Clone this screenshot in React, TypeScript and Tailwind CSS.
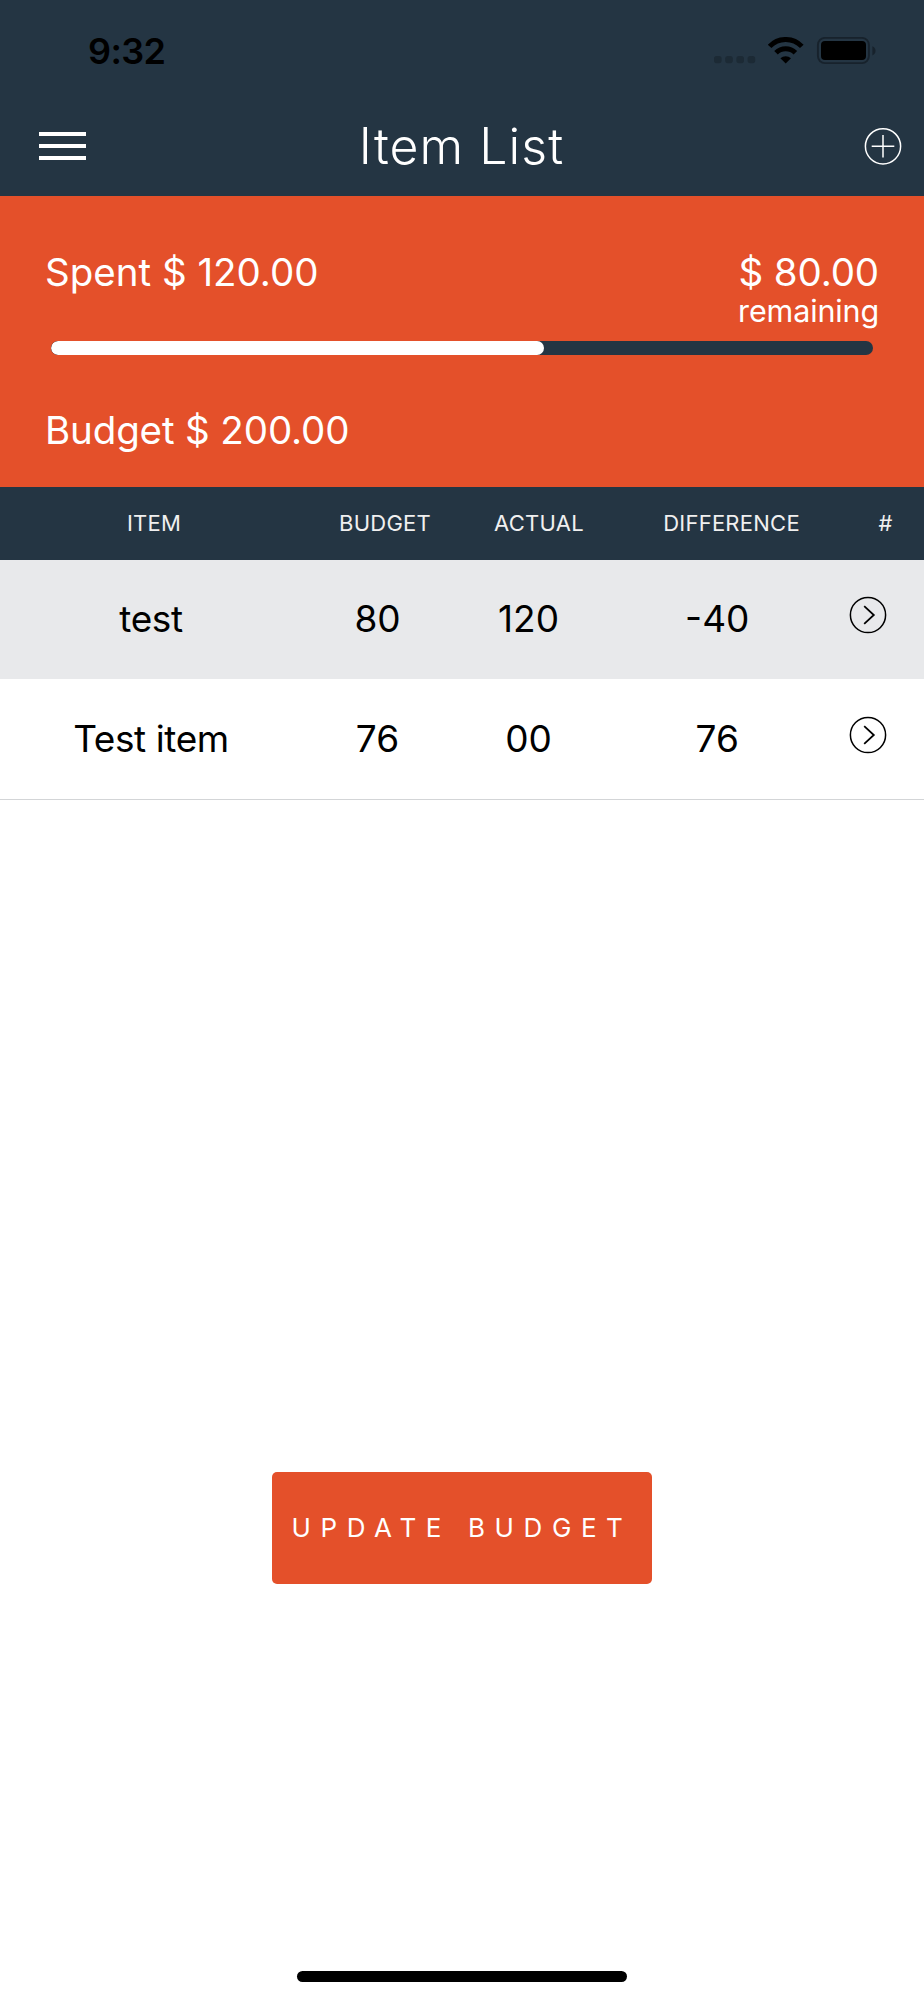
import { clsx } from "clsx";

const items = [
  { name: "test", budget: "80", actual: "120", difference: "-40" },
  { name: "Test item", budget: "76", actual: "00", difference: "76" },
];

const spent = 120;
const budget = 200;

function StatusBar() {
  return (
    <div className="flex h-[101px] items-center justify-between pl-[88px] pr-[48px] text-black">
      <span className="mt-px text-[36px] leading-none font-semibold tracking-[-0.6px]">9:32</span>
      <svg width="164" height="30" viewBox="0 0 164 30" className="mt-[2px]">
        {/* signal */}
        <g fill="#1c2a35">
          <rect x="2" y="19" width="7.6" height="7.2" rx="2.6" />
          <rect x="13.2" y="19" width="7.6" height="7.2" rx="2.6" />
          <rect x="24.4" y="19" width="7.6" height="7.2" rx="2.6" />
          <rect x="35.6" y="19" width="7.6" height="7.2" rx="2.6" />
        </g>
        {/* wifi */}
        <g fill="none" stroke="#000" strokeWidth="5">
          <path d="M57.6 9.4 A22.2 22.2 0 0 1 89.8 9.4" />
          <path d="M64 15.8 A13.6 13.6 0 0 1 83.4 15.8" />
        </g>
        <path d="M73.7 26.6 L68.4 21.3 A7.8 7.8 0 0 1 79 21.3 Z" fill="#000" />
        {/* battery */}
        <rect x="105.9" y="0.9" width="51" height="25.2" rx="7" fill="none" stroke="#17222c" strokeWidth="1.9" />
        <rect x="109" y="4" width="45" height="19" rx="4" fill="#000" />
        <path d="M160.4 9.2 C164.6 10.8 164.6 16.8 160.4 18.4 Z" fill="#17222c" />
      </svg>
    </div>
  );
}

function Header() {
  return (
    <div className="flex h-[95px] items-start justify-between pl-[39px] pr-[22px]">
      <button className="mt-[31px] flex w-[47px] flex-col gap-2">
        <span className="h-1 w-full bg-white" />
        <span className="h-1 w-full bg-white" />
        <span className="h-1 w-full bg-white" />
      </button>
      <h1 className="mt-[15px] ml-[-27px] text-[50px] leading-[60px] font-light tracking-[1.05px]">Item List</h1>
      <button className="mt-[26px]">
        <svg width="38" height="38" viewBox="0 0 38 38" fill="none" stroke="#fff" strokeWidth="1.5">
          <circle cx="19" cy="19.3" r="17.6" />
          <path d="M19 8 V30.6 M7.7 19.3 H30.3" />
        </svg>
      </button>
    </div>
  );
}

function Summary() {
  return (
    <section className="h-[291px] bg-[#e4502a] px-[45px] pt-[51px] text-[38.5px] leading-[50px]">
      <div className="flex justify-between">
        <p>Spent $ 120.00</p>
        <div className="text-right tracking-[-0.13px]">
          <p>$ 80.00</p>
          <p className="text-[30.5px] leading-[27px]">remaining</p>
        </div>
      </div>
      <div className="mx-[6px] mt-[17px] h-[14px] overflow-hidden rounded-full bg-[#243543]">
        <div className="h-full rounded-full bg-white" style={{ width: `${(spent / budget) * 100}%` }} />
      </div>
      <p className="mt-[50px] tracking-[-0.13px]">Budget $ 200.00</p>
    </section>
  );
}

function ItemTable() {
  return (
    <section className="text-center">
      <div className="grid h-[73px] grid-cols-[4fr_2fr_2fr_3fr_1fr] items-center bg-[#243543] text-[22px] tracking-[0.25px] text-[#f0f0f0]">
        <span>ITEM</span>
        <span>BUDGET</span>
        <span>ACTUAL</span>
        <span>DIFFERENCE</span>
        <span>#</span>
      </div>
      {items.map((item, i) => (
        <div
          key={item.name}
          className={clsx(
            "grid grid-cols-[4fr_2fr_2fr_3fr_1fr] items-center pr-[18px] text-[37px] text-black",
            i % 2 === 0 ? "h-[119px] bg-[#e8e9eb] pb-[2px]" : "h-[121px] border-b border-[#d3d5d7] bg-white"
          )}
        >
          <span className="tracking-[-0.4px]">{item.name}</span>
          <span>{item.budget}</span>
          <span>{item.actual}</span>
          <span>{item.difference}</span>
          <button className="-mt-2 justify-self-center">
            <svg width="38" height="38" viewBox="0 0 38 38" fill="none" stroke="#000" strokeWidth="1.5">
              <circle cx="19" cy="19" r="17.6" />
              <path d="M15.2 10.2 L24.8 19 L15.2 27.8" strokeWidth="1.8" />
            </svg>
          </button>
        </div>
      ))}
    </section>
  );
}

export default function App() {
  return (
    <main className="flex h-[2000px] w-full flex-col bg-white font-['Inter',sans-serif] text-white">
      <header className="bg-[#243543]">
        <StatusBar />
        <Header />
      </header>
      <Summary />
      <ItemTable />
      <button className="mt-[671.5px] h-[112px] w-[380px] self-center rounded-[5px] bg-[#e4502a] pb-px text-[26px] tracking-[9.6px] whitespace-nowrap">
        UPDATE BUDGET
      </button>
      <div className="mt-auto mb-[18px] h-[11px] w-[330px] self-center rounded-full bg-black" />
    </main>
  );
}
